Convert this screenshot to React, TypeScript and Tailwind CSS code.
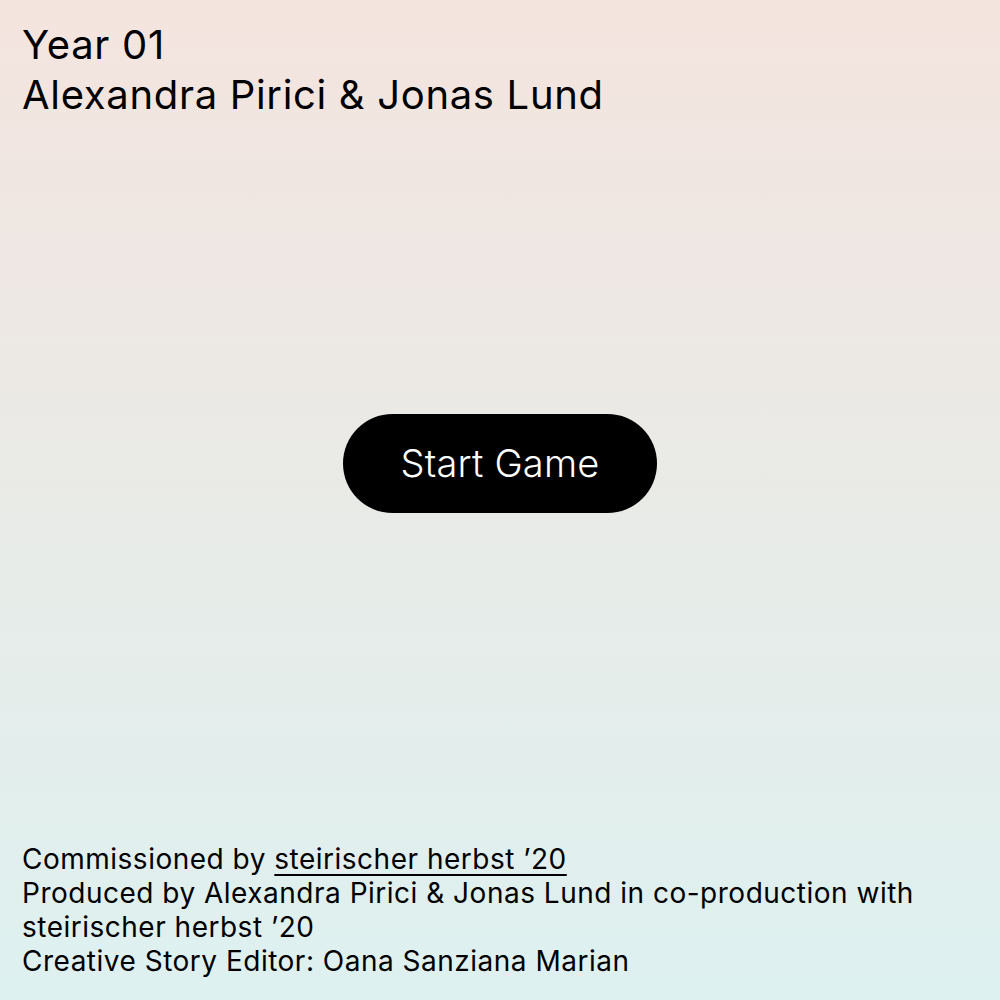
export default function App() {
  return (
    <div
      className="w-full h-[1000px] flex flex-col bg-gradient-to-b from-[#f4e4de] to-[#ddf1f0] text-black px-[22px] pt-[20px] pb-[22px]"
      style={{ fontFamily: "Inter, 'Noto Sans', sans-serif" }}
    >
      <div className="text-[40px] leading-[50px] tracking-[0.68px]">
        <div>Year 01</div>
        <div>Alexandra Pirici &amp; Jonas Lund</div>
      </div>
      <div className="flex-1 flex items-center justify-center pb-[36px]">
        <button className="w-[314px] h-[99px] rounded-full bg-black text-white text-[38px] font-light tracking-[0.2px] flex items-center justify-center">
          Start Game
        </button>
      </div>
      <div className="text-[28px] leading-[34px] tracking-[0.5px]">
        <div>
          Commissioned by{" "}
          <span className="underline underline-offset-[5px] decoration-[2px]">steirischer herbst ’20</span>
        </div>
        <div>Produced by Alexandra Pirici &amp; Jonas Lund in co-production with</div>
        <div>steirischer herbst ’20</div>
        <div>Creative Story Editor: Oana Sanziana Marian</div>
      </div>
    </div>
  );
}
